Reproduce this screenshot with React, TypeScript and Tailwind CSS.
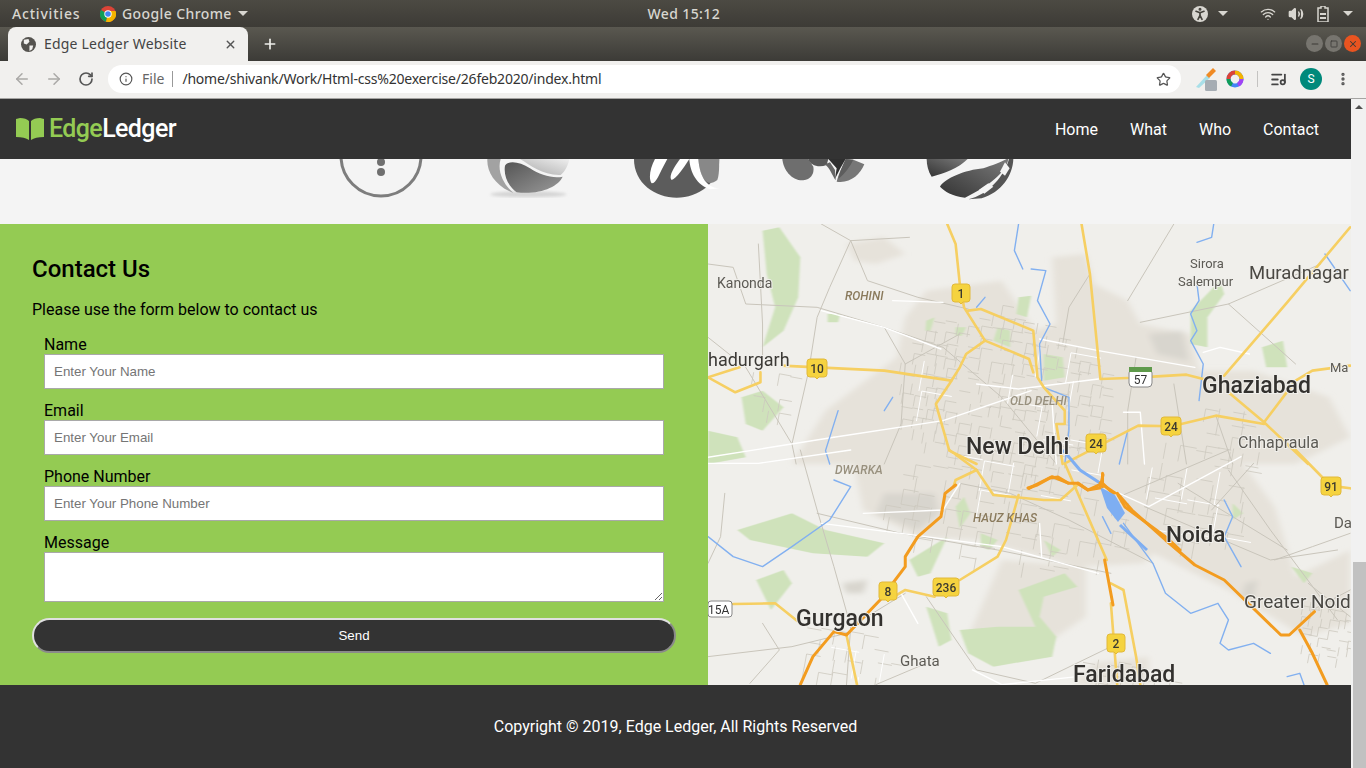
import React from 'react';
import { ArrowLeft, ArrowRight, RotateCw, Info, Star, X, Plus, Minus, MoreVertical, Square, ListMusic, Volume2, Wifi, PersonStanding } from 'lucide-react';

type Pts = number[];
const toPath = (p: Pts) => {
  let d = `M${p[0]} ${p[1]}`;
  for (let i = 2; i < p.length; i += 2) d += `L${p[i]} ${p[i + 1]}`;
  return d;
};

// street grids of the built-up areas, jittered so they do not look ruled
let seed = 17;
const rnd = () => {
  seed = (seed * 16807) % 2147483647;
  return seed / 2147483647;
};
const streets = (cx: number, cy: number, rx: number, ry: number, step: number, keep: number) => {
  let d = '';
  for (let x = cx - rx; x < cx + rx; x += step) {
    for (let y = cy - ry; y < cy + ry; y += step) {
      const q = ((x - cx) / rx) ** 2 + ((y - cy) / ry) ** 2;
      if (q > 1) continue;
      const x0 = x + rnd() * 5;
      const y0 = y + (x - cx) * 0.12 + rnd() * 5;
      if (rnd() < keep) d += `M${x0.toFixed(1)} ${y0.toFixed(1)}L${(x0 + step).toFixed(1)} ${(y0 + step * 0.18).toFixed(1)}`;
      if (rnd() < keep) d += `M${x0.toFixed(1)} ${y0.toFixed(1)}L${(x0 - step * 0.18).toFixed(1)} ${(y0 + step).toFixed(1)}`;
    }
  }
  return d;
};
const greyStreets = [
  streets(1000, 390, 110, 85, 11, 0.62),
  streets(1000, 510, 130, 55, 15, 0.5),
  streets(1190, 490, 60, 60, 16, 0.5),
  streets(1225, 430, 35, 35, 13, 0.5),
  streets(770, 385, 30, 25, 12, 0.4),
  streets(840, 650, 50, 35, 14, 0.5),
  streets(1120, 670, 50, 20, 12, 0.6),
  streets(1320, 625, 30, 35, 9, 0.6),
].join('');
const whiteStreets = [
  streets(1000, 410, 110, 100, 30, 0.45),
  streets(1180, 490, 60, 55, 32, 0.45),
  streets(850, 650, 50, 30, 28, 0.4),
].join('');

// coordinates are taken from two crops of the map, hence the two groups
const top = {
  patches: [
    [330,60,420,40,470,90,400,120,350,110],
    [520,200,700,170,780,320,1000,230,1030,300,1150,330,1170,440,1300,440,1480,520,1530,640,1400,720,200,720,280,560,450,400,470,280],
    [820,100,900,90,920,180,1000,230,960,330,830,300],
  ],
  darkPatches: [[1050,330,1130,320,1145,410,1070,390]],
  green: [
    [130,20,170,10,220,100,215,220,180,320,130,370,160,250,140,150],
    [740,220,770,215,760,280,735,270],
    [800,390,845,400,850,460,800,470],
    [1150,260,1220,170,1230,210,1190,280,1190,370,1150,360],
    [1320,370,1370,350,1380,430,1330,430],
    [80,520,130,500,180,550,130,620,90,600],
    [0,620,70,640,90,700,0,720],
    [285,270,315,270,310,295,285,295],
    [520,290,540,280,530,320,518,320],
    [590,310,615,310,605,335,590,335],
    [690,310,720,320,720,370,680,350],
  ],
  minor: [
    [270,0,340,50,480,40],[340,50,290,190,260,280,240,440,200,660,210,720],[120,60,130,300,130,420],
    [0,120,60,130,90,240,260,250,420,310,560,370,700,520,830,720],
    [340,50,380,170,500,220,620,255],[420,310,470,420,460,600,420,720],
    [0,340,90,430,200,660],[470,420,600,330],
    [910,150,860,250,845,360],
    [1000,230,1110,0],[1030,295,1240,240,1460,120],[1240,240,1400,420],
    [1020,400,1000,560,1000,720],[1110,480,1140,720],
    [1210,575,1250,720],
  ],
  white: [
    [270,260,420,310,555,375],[440,230,560,235],[790,345,930,380,1160,430],
    [640,480,740,495,930,465],[300,640,0,700],[300,640,560,590,770,500],
    [820,540,830,720],[990,565,1030,565,1040,720],[1180,385,1220,370,1290,390],
  ],
  water: [
    [740,0,730,80,750,135],[770,135,805,140,785,230,815,300,790,360,795,470],[660,220,640,250],
    [1205,0,1200,40,1165,55],[1165,180,1170,230,1150,270,1165,320,1150,350,1180,420,1170,530],
    [800,490,860,520,860,620,850,720],[440,520,420,560],[310,560,280,680,290,720],[1000,620,980,720],
    [1530,200,1470,90],
  ],
  yellow: [
    [570,0,590,60,600,180,610,250,660,350],[620,260,650,255,775,320,785,460,800,490,850,560,850,600,830,600,845,720],
    [660,350,765,405,775,445],[660,350,615,390,600,430,575,480,543,540,575,680,640,720],
    [0,460,75,430],[175,425,420,440,580,470],[0,460,65,505,125,475,125,445],
    [890,0,910,150,935,465,1000,462],[1060,458,1140,452,1180,465],
    [1530,10,1380,235,1230,455],[1240,505,1325,595,1430,720],[1325,595,1400,470,1440,440,1530,425],
    [855,715,1025,605,1105,607,1210,575,1325,600],
  ],
};

const bottom = {
  patches: [
    [340,0,1250,0,1350,170,1400,380,1530,300,1530,520,1420,560,1240,420,1060,310,1040,340,880,350,760,310,640,270,500,260,370,180],
    [700,330,900,350,900,500,760,620,620,560],[920,640,1050,620,1050,704,870,704],
  ],
  darkPatches: [[420,130,540,130,550,190,500,240,400,190],[320,400,380,390,370,430,330,430],[1280,400,1310,390,1300,450,1270,440]],
  green: [
    [70,240,200,190,280,240,420,280,380,320,250,310,100,270],
    [115,390,180,360,200,400,150,480],[590,170,610,140,625,190,600,235],
    [480,330,570,260,530,370,500,380],[650,250,690,270,670,300,650,290],
    [740,420,850,370,880,410,800,440,790,500,830,560,820,620,680,650,620,610,600,540,690,530,780,530],
    [520,470,570,490,580,570,550,590],[800,270,840,300,820,320],[1250,160,1275,190,1250,210],
    [1390,350,1440,370,1420,400],
  ],
  minor: [
    [220,0,260,180,300,350,340,530],[260,190,460,250,690,300,960,370],
    [40,130,30,260,0,340],[340,530,470,430],[130,520,170,600,100,700],[0,620,200,590,330,550],
    [520,440,640,660,780,700,960,590],[600,100,720,130,860,210,1060,340],
    [980,140,1240,0],[1040,170,1340,330,1500,300],[1240,60,1340,240,1500,510],
    [1120,100,1380,300],[1300,40,1200,180],[1530,250,1440,290,1350,330],
    [1430,400,1530,500],[1440,480,1530,420],[340,530,330,704],[520,640,400,704],
  ],
  white: [
    [0,40,120,40,340,0],[270,220,460,250,700,290,930,370],[630,660,700,704,880,680],[790,220,795,320],
    [980,130,1050,170,1270,20],[600,100,560,180,370,190],[460,430,500,520],
  ],
  water: [
    [300,90,340,110,290,210,200,290,130,350,60,320,0,260],[1230,150,1250,200,1230,260,1270,350],
    [990,220,1060,340,1090,430,1150,490,1215,460,1240,510,1220,580,1240,600,1300,580,1340,610],
    [940,200,960,250],[1380,680,1410,670,1420,704],
  ],
  yellow: [
    [575,0,640,60,680,135,800,150,840,150,880,105],[640,60,590,90,585,110],[740,135,710,270,690,320,600,390],
    [850,40,950,330],[960,400,990,420,1020,620,1030,704],[960,460,975,704],
    [60,462,160,460,215,515],[450,435,470,420,540,440],[330,555,355,704],
    [1400,0,1470,90],[1500,110,1530,115],
  ],
  orange: [
    [220,704,250,620,300,545,330,555,410,450,470,350,470,320,500,260,555,200,565,130,590,105],
    [765,115,780,105,820,80,860,100,880,100,905,120,940,100,965,130],[940,70,940,110],
    [975,130,1010,180,1090,270,1160,345,1230,390,1365,555,1385,555,1445,485],
    [1410,540,1440,610,1475,704],[945,330,965,465],
  ],
};

const Land = ({ d, tf }: { d: typeof bottom | typeof top; tf: string }) => (
  <g transform={tf}>
    <g filter="url(#soft)">
      {d.patches.map((p, i) => <path key={i} d={toPath(p) + 'Z'} fill="#e6e2da" />)}
      {d.darkPatches.map((p, i) => <path key={i} d={toPath(p) + 'Z'} fill="#d8d5ce" />)}
    </g>
    <g filter="url(#softer)">
      {d.green.map((p, i) => <path key={i} d={toPath(p) + 'Z'} fill="#cfe2bb" />)}
    </g>
  </g>
);

const Roads = ({ d, tf }: { d: typeof bottom | typeof top; tf: string }) => {
  const orange = 'orange' in d ? d.orange : [];
  return (
    <g transform={tf} fill="none" strokeLinecap="round" strokeLinejoin="round">
      {d.minor.map((p, i) => <path key={i} d={toPath(p)} stroke="#c9c5bb" strokeWidth={1} vectorEffect="non-scaling-stroke" />)}
      {d.white.map((p, i) => <path key={i} d={toPath(p)} stroke="#ffffff" strokeWidth={1.4} vectorEffect="non-scaling-stroke" />)}
      {d.water.map((p, i) => <path key={i} d={toPath(p)} stroke="#82b0f0" strokeWidth={1.4} vectorEffect="non-scaling-stroke" />)}
      {d.yellow.map((p, i) => <path key={i} d={toPath(p)} stroke="#f6cf62" strokeWidth={2.6} vectorEffect="non-scaling-stroke" />)}
      {orange.map((p, i) => <path key={i} d={toPath(p)} stroke="#f39c1f" strokeWidth={3} vectorEffect="non-scaling-stroke" />)}
    </g>
  );
};

const labels: [string, number, number, number, string][] = [
  ['Kanonda', 717, 288, 14, '#5c5a54'],
  ['Sirora', 1190, 268, 13, '#5c5a54'],
  ['Salempur', 1178, 286, 13, '#5c5a54'],
  ['Muradnagar', 1249, 279, 18.5, '#4a4843'],
  ['hadurgarh', 708, 366, 18, '#3c3a36'],
  ['Ma', 1330, 372, 13, '#5c5a54'],
  ['Ghaziabad', 1202, 393, 23, '#33312e'],
  ['Chhapraula', 1238, 448, 16, '#5c5a54'],
  ['New Delhi', 966, 454, 23, '#33312e'],
  ['Da', 1334, 528, 15, '#5c5a54'],
  ['Noida', 1166, 542, 22.5, '#33312e'],
  ['Greater Noid', 1244, 608, 19, '#4a4843'],
  ['Gurgaon', 796, 626, 23, '#33312e'],
  ['Ghata', 900, 666, 15, '#5c5a54'],
  ['Faridabad', 1073, 682, 23, '#33312e'],
];
const areas: [string, number, number, string][] = [
  ['ROHINI', 845, 300, '#8a7a5c'],
  ['OLD DELHI', 1010, 405, '#98907e'],
  ['DWARKA', 835, 474, '#98907e'],
  ['HAUZ KHAS', 973, 522, '#8a7a5c'],
];
const shields: [string, number, number, number][] = [
  ['1', 961, 294, 18],['10', 817, 369, 20],['24', 1096, 444, 20],['24', 1171, 427, 20],
  ['91', 1331, 487, 20],['8', 888, 592, 18],['236', 946, 588, 26],['2', 1116, 644, 18],
];

const MapPicture = () => (
  <svg className="w-full h-full blur-[0.4px]" viewBox="708 224 643 461" preserveAspectRatio="none">
    <defs>
      <filter id="soft" x="-10%" y="-10%" width="120%" height="120%"><feGaussianBlur stdDeviation="8" /></filter>
      <filter id="softer" x="-10%" y="-10%" width="120%" height="120%"><feGaussianBlur stdDeviation="2" /></filter>
    </defs>
    <rect x="708" y="224" width="643" height="461" fill="#f0efeb" />
    <Land d={top} tf="translate(708 224) scale(0.4197 0.3333)" />
    <Land d={bottom} tf="translate(708 450) scale(0.4197 0.3333)" />
    <path d={greyStreets} fill="none" stroke="#cdc9bf" strokeWidth="0.8" />
    <path d={whiteStreets} fill="none" stroke="#ffffff" strokeWidth="1" />
    <Roads d={top} tf="translate(708 224) scale(0.4197 0.3333)" />
    <Roads d={bottom} tf="translate(708 450) scale(0.4197 0.3333)" />
    {/* Yamuna by the Okhla barrage, on top of the roads */}
    <g fill="#7eaef2" stroke="none">
      <path d="M1100 487 L1115 495 L1125 513 L1118 522 L1107 508Z" />
    </g>
    <path d="M1063 450 L1080 470 L1100 483 M1120 525 L1147 550" fill="none" stroke="#7eaef2" strokeWidth="3" />
    <path d="M1028 488 L1037 485 L1050 478 L1058 477 L1068 483 M1078 483 L1088 490 L1100 488 L1103 475 M1100 483 L1115 493 M1118 495 L1125 507 L1167 538 L1180 550" fill="none" stroke="#f39c1f" strokeWidth="3" strokeLinecap="round" />
    {areas.map(([t, x, y, c]) => (
      <text key={t} x={x} y={y} fontFamily="Roboto, sans-serif" fontStyle="italic" fontWeight="500" fontSize="12" fill={c}>{t}</text>
    ))}
    {labels.map(([t, x, y, s, c]) => (
      <text key={t} x={x} y={y} fontFamily="Roboto, sans-serif" fontSize={s} fill={c} fontWeight={s > 20 ? 500 : 400} stroke="#f0efeb" strokeWidth="2" paintOrder="stroke">{t}</text>
    ))}
    {shields.map(([t, x, y, w], i) => (
      <g key={i}>
        <path d={`M${x - w / 2} ${y - 7} q0 -3 3 -3 h${w - 6} q3 0 3 3 v12 q0 3 -3 3 h-${(w - 6) / 2 - 2} l-2 2 l-2 -2 h-${(w - 6) / 2 - 2} q-3 0 -3 -3z`} fill="#f5d33f" stroke="#e2b93a" />
        <text x={x} y={y + 4} textAnchor="middle" fontFamily="Roboto, sans-serif" fontWeight="500" fontSize="12" fill="#3b3a30">{t}</text>
      </g>
    ))}
    <g>
      <rect x="1129" y="369" width="23" height="18" rx="4" fill="#fff" stroke="#888" />
      <rect x="1129" y="367" width="23" height="5" fill="#5f9a4b" />
      <text x="1140.5" y="384" textAnchor="middle" fontFamily="Roboto, sans-serif" fontSize="12" fill="#333">57</text>
      <rect x="708" y="601" width="24" height="16" rx="3" fill="#fff" stroke="#888" />
      <text x="708" y="614" fontFamily="Roboto, sans-serif" fontSize="12" fill="#333">15A</text>
    </g>
  </svg>
);

const Logos = () => (
  <svg width="690" height="65" viewBox="335 159 690 65" className="block">
    <defs>
      <linearGradient id="sphere" x1="0" y1="0" x2="1" y2="1">
        <stop offset="0" stopColor="#555" />
        <stop offset="1" stopColor="#9a9a9a" />
      </linearGradient>
      <linearGradient id="cap" x1="0" y1="1" x2="1" y2="0">
        <stop offset="0" stopColor="#aaa" />
        <stop offset="1" stopColor="#eee" />
      </linearGradient>
      <linearGradient id="dark" x1="0" y1="1" x2="1" y2="0">
        <stop offset="0" stopColor="#333" />
        <stop offset="1" stopColor="#7a7a7a" />
      </linearGradient>
      <filter id="shade"><feGaussianBlur stdDeviation="4" /></filter>
    </defs>
    {/* 1 */}
    <circle cx="381" cy="156" r="40" fill="none" stroke="#7d7d7d" strokeWidth="3" />
    <circle cx="381" cy="162" r="4" fill="#6f6f6f" />
    <circle cx="381" cy="172" r="4" fill="#6f6f6f" />
    {/* 2 and 3, drawn in the pixels of a 3x crop */}
    <g transform="translate(480 155) scale(0.3333)">
      <ellipse cx="145" cy="118" rx="115" ry="9" fill="#d4d4d4" filter="url(#shade)" />
      <path d="M22 12 C20 50 45 92 100 114 C72 90 50 50 62 12Z" fill="#a2a2a2" />
      <path d="M75 32 C85 15 120 20 150 40 C180 60 220 72 248 65 C235 95 180 120 110 112 C85 95 70 60 75 32Z" fill="url(#sphere)" />
      <path d="M120 12 C150 30 190 62 242 60 C255 50 265 30 268 12Z" fill="url(#cap)" />
      <path d="M462 12 C462 85 525 128 590 128 C655 128 718 85 718 12Z" fill="#5c5c5c" />
      <path d="M655 12 C660 70 680 100 712 75 C718 60 718 30 717 12Z" fill="#888888" />
      <path d="M525 12 C510 40 505 70 515 85 C530 85 535 60 562 12Z" fill="#fff" />
      <path d="M600 12 C580 40 565 65 575 75 C590 70 610 40 628 12Z" fill="#fff" />
      <path d="M628 12 C630 50 650 92 692 103 L718 100 C682 98 660 70 655 12Z" fill="#fff" />
    </g>
    {/* 4 and 5 */}
    <g transform="translate(775 155) scale(0.3333)">
      <path d="M22 12 C25 45 50 78 85 76 C110 72 118 55 115 35 L100 12Z" fill="#6e6e6e" />
      <path d="M100 12 C105 30 130 40 155 30 L160 12Z" fill="#585858" />
      <path d="M160 12 L185 40 L180 72 L196 40 L212 12Z" fill="#2f2f2f" />
      <path d="M150 28 C165 40 172 62 182 76 L180 45 L165 22Z" fill="#666" />
      <path d="M212 12 C200 40 190 60 185 80 C225 86 255 60 268 28 L235 14Z" fill="#777" />
      <path d="M212 12 C200 40 192 55 190 72 C210 55 225 35 235 14Z" fill="#5d5d5d" />
      <path d="M455 12 C455 30 460 50 470 65 C510 55 550 40 578 12Z" fill="url(#dark)" />
      <path d="M715 12 C714 60 680 112 620 130 L580 133 C640 120 690 60 702 12Z" fill="#555" />
      <path d="M495 95 C510 70 570 45 625 40 C650 32 680 20 695 12 L700 12 C695 50 640 95 570 128 C530 122 510 110 495 95Z" fill="url(#dark)" />
      <path d="M675 50 L690 22 L704 40 L690 62Z" fill="#f4f4f4" />
      <path d="M612 104 L640 85 L655 95 L628 116Z" fill="#f4f4f4" />
    </g>
  </svg>
);

const ChromeLogo = () => (
  <svg width="16" height="16" viewBox="0 0 16 16">
    <circle cx="8" cy="8" r="8" fill="#db4437" />
    <path d="M8 8 L1 4 A8 8 0 0 0 6 15.8Z" fill="#0f9d58" />
    <path d="M8 8 L6 15.8 A8 8 0 0 0 15.5 5 L8 5Z" fill="#f4b400" />
    <circle cx="8" cy="8" r="3.7" fill="#fff" />
    <circle cx="8" cy="8" r="2.8" fill="#4285f4" />
  </svg>
);

const Caret = () => <span className="inline-block w-0 h-0 border-x-[5px] border-x-transparent border-t-[5px] border-t-[#d8d6d0]" />;

const Field = ({ label, placeholder }: { label: string; placeholder: string }) => (
  <div className="flex flex-col h-[66px]">
    <label className="text-base leading-[22px] h-5 text-black">{label}</label>
    <input
      placeholder={placeholder}
      className="w-[620px] h-[35px] border border-[#a9a9a9] bg-white px-[9px] text-[13.33px] outline-none placeholder:text-[#757575] font-['Liberation_Sans',sans-serif]"
    />
  </div>
);

export default function App() {
  return (
    <div className="w-[1366px] h-[768px] overflow-hidden flex flex-col font-['Roboto',sans-serif]">
      {/* gnome bar */}
      <div className="h-[27px] shrink-0 bg-gradient-to-b from-[#4c4a43] to-[#3d3b36] flex items-center text-[#d8d6d0] text-sm font-['Noto_Sans',sans-serif] font-medium tracking-[0.4px]">
        <span className="ml-3 w-[88px] tracking-[0.8px]">Activities</span>
        <ChromeLogo />
        <span className="ml-[6px]">Google Chrome</span>
        <span className="ml-[6px] mb-[1px] flex"><Caret /></span>
        <span className="ml-[396px] w-[80px] text-center">Wed 15:12</span>
        <div className="ml-auto flex items-center mr-[13px]">
          <PersonStanding size={16} className="bg-[#d8d6d0] text-[#45433d] rounded-full" strokeWidth={2.5} />
          <span className="ml-[10px] flex"><Caret /></span>
          <Wifi size={16} className="ml-[32px]" />
          <Volume2 size={16} className="ml-[12px]" fill="#d8d6d0" />
          <svg width="12" height="16" viewBox="0 0 12 16" className="ml-[13px]">
            <path d="M4 0h4v2h3v14H1V2h3z" fill="none" stroke="#d8d6d0" strokeWidth="1.5" />
            <path d="M3 7h6v2H3zM3 11h6v2H3z" fill="#d8d6d0" />
          </svg>
          <span className="ml-[14px] flex"><Caret /></span>
        </div>
      </div>

      {/* tab strip */}
      <div className="h-[34px] shrink-0 bg-gradient-to-b from-[#5a5850] to-[#3c3b37] flex items-end pl-2">
        <div className="w-[240px] h-[34px] mt-auto bg-[#f1f0ee] rounded-t-lg flex items-center pl-[13px] text-sm text-[#444] font-['Noto_Sans',sans-serif]">
          <svg width="15" height="15" viewBox="0 0 16 16">
            <circle cx="8" cy="8" r="8" fill="#55534f" />
            <path d="M3 3 L8 2 L9 5 L6 8 L3 7Z M9 9 L13 9 L12 13 L9 15Z" fill="#f1f0ee" />
          </svg>
          <span className="ml-[8px] tracking-[0.2px]">Edge Ledger Website</span>
          <X size={13} className="ml-auto mr-[11px] text-[#555]" strokeWidth={2.5} />
        </div>
        <Plus size={16} className="ml-[14px] mb-[9px] text-[#eeeeea]" strokeWidth={2.5} />
        <div className="ml-auto mr-[5px] mb-[9px] flex items-center gap-[2px]">
          <span className="w-[17px] h-[17px] rounded-full bg-[#77756f] flex items-center justify-center"><Minus size={10} className="text-[#3c3b37]" strokeWidth={2.5} /></span>
          <span className="w-[17px] h-[17px] rounded-full bg-[#77756f] flex items-center justify-center"><Square size={8} className="text-[#3c3b37]" strokeWidth={2.5} /></span>
          <span className="w-[17px] h-[17px] rounded-full bg-[#e95420] flex items-center justify-center"><X size={10} className="text-[#3c3b37]" strokeWidth={2.5} /></span>
        </div>
      </div>

      {/* toolbar */}
      <div className="h-[38px] shrink-0 bg-[#f1f0ee] border-b border-[#a5a4a2] flex items-center pb-[1px]">
        <ArrowLeft size={18} className="ml-[13px] text-[#aaa9a7]" />
        <ArrowRight size={18} className="ml-[14px] text-[#aaa9a7]" />
        <RotateCw size={16} className="ml-[15px] text-[#555]" strokeWidth={2.5} />
        <div className="ml-[14px] w-[1073px] h-[28px] bg-white rounded-full flex items-center pl-[11px] text-sm font-['Noto_Sans',sans-serif]">
          <Info size={14} className="text-[#555]" />
          <span className="ml-[9px] text-[#666]">File</span>
          <span className="ml-[8px] w-px h-[16px] bg-[#999]" />
          <span className="ml-[9px] text-[#333] tracking-[-0.2px]">/home/shivank/Work/Html-css%20exercise/26feb2020/index.html</span>
          <Star size={15} className="ml-auto mr-[10px] text-[#555]" strokeWidth={2} />
        </div>
        <svg width="24" height="24" viewBox="0 0 24 24" className="ml-[12px]">
          <path d="M3 20 L14 8 L17 11 L6 21Z" fill="#a8dfe8" />
          <path d="M13 8 L20 1 L23 4 L16 11Z" fill="#f08a24" />
          <rect x="12" y="13" width="12" height="11" rx="1.5" fill="#a6adb3" />
        </svg>
        <svg width="18" height="18" viewBox="0 0 18 18" className="ml-[9px]" fill="none" strokeWidth="4">
          <circle cx="9" cy="9" r="6.5" stroke="#4285f4" />
          <path d="M9 2.5 A6.5 6.5 0 0 1 15.5 9" stroke="#f4b400" />
          <path d="M2.5 9 A6.5 6.5 0 0 1 9 2.5" stroke="#db4437" />
          <path d="M2.5 9 A6.5 6.5 0 0 0 6 14.8" stroke="#0f9d58" />
          <path d="M15.5 9 A6.5 6.5 0 0 1 12 14.8" stroke="#a142f4" />
        </svg>
        <span className="ml-[13px] w-px h-[16px] bg-[#c4c3c1]" />
        <ListMusic size={17} className="ml-[12px] text-[#444]" strokeWidth={2.5} />
        <span className="ml-[13px] w-[22px] h-[22px] rounded-full bg-[#00897b] text-white text-xs flex items-center justify-center">S</span>
        <MoreVertical size={16} className="ml-[13px] text-[#555]" strokeWidth={3} />
      </div>

      {/* page + scrollbar */}
      <div className="flex-1 flex min-h-0">
        <div className="w-[1351px] flex flex-col">
          <nav className="h-[60px] shrink-0 bg-[#333333] flex items-center pl-4 pr-[32px] relative z-10">
            <svg width="28" height="22" viewBox="0 0 28 22">
              <path d="M0 1 L4 0 C8 0 11 1 13 3 L13 22 C10 20 6 19 0 19Z" fill="#94cb53" />
              <path d="M28 1 L24 0 C20 0 17 1 15 3 L15 22 C18 20 22 19 28 19Z" fill="#94cb53" />
            </svg>
            <span className="ml-[5px] text-[25px] font-medium tracking-[-0.6px] text-[#94cb53]">Edge<span className="text-white">Ledger</span></span>
            <div className="ml-auto mt-[2px] flex gap-8 text-base text-white">
              <a>Home</a><a>What</a><a>Who</a><a>Contact</a>
            </div>
          </nav>

          <section className="h-[65px] shrink-0 bg-[#f4f4f4] overflow-hidden pl-[335px]">
            <Logos />
          </section>

          <section className="h-[461px] shrink-0 flex">
            <div className="w-[708px] bg-[#94cb53] pl-8 pt-[30px] text-black">
              <h2 className="text-2xl leading-[30px] font-medium">Contact Us</h2>
              <p className="text-base mt-[14px] leading-6">Please use the form below to contact us</p>
              <form className="ml-3 mt-[12px]">
                <Field label="Name" placeholder="Enter Your Name" />
                <Field label="Email" placeholder="Enter Your Email" />
                <Field label="Phone Number" placeholder="Enter Your Phone Number" />
                <label className="block text-base leading-[22px] h-5">Message</label>
                <textarea className="block w-[620px] h-[50px] border border-[#a9a9a9] bg-white outline-none" />
              </form>
              <button className="block mt-4 w-[644px] h-[35px] rounded-[20px] bg-[#333333] text-white text-[13.33px] font-['Liberation_Sans',sans-serif] border-2 border-t-[#e0e0e0] border-l-[#e0e0e0] border-r-[#8a8a8a] border-b-[#8a8a8a]">Send</button>
            </div>
            <div className="w-[643px] h-[461px] overflow-hidden">
              <MapPicture />
            </div>
          </section>

          <footer className="flex-1 bg-[#333333] flex items-center justify-center text-base text-white">
            Copyright © 2019, Edge Ledger, All Rights Reserved
          </footer>
        </div>

        <div className="w-[15px] flex flex-col bg-[#f1f1f1]">
          <div className="h-[15px] flex items-center justify-center">
            <span className="w-0 h-0 border-x-[4px] border-x-transparent border-b-[4px] border-b-[#505050]" />
          </div>
          <div className="h-[448px]" />
          <div className="flex-1 ml-[2px] bg-[#c1c1c1]" />
        </div>
      </div>
    </div>
  );
}
